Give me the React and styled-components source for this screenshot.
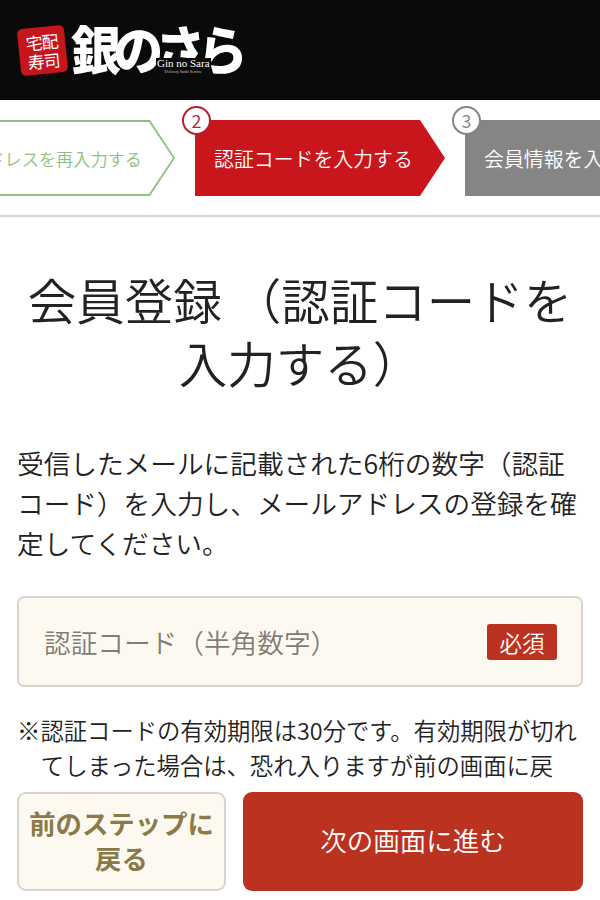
import React from "react";
import styled, { createGlobalStyle } from "styled-components";

const Global = createGlobalStyle`
  html, body { margin: 0; padding: 0; background: #fff; }
  body { font-family: "Noto Sans CJK JP", "Noto Sans", sans-serif; color: #222; }
  * { box-sizing: border-box; }
`;

const Page = styled.div`
  position: relative;
  width: 600px;
  height: 900px;
  overflow: hidden;
  background: #fff;
`;

const Header = styled.header`
  height: 100px;
  background: #0a0a0a;
  display: flex;
  align-items: center;
  padding: 0 0 0 19px;
`;

const Stamp = styled.div`
  width: 47px;
  height: 47px;
  background: #c4161c;
  border-radius: 5px;
  transform: rotate(-6deg);
  color: #fff;
  font-size: 17px;
  font-weight: 400;
  line-height: 19px;
  letter-spacing: -1px;
  display: flex;
  flex-wrap: wrap;
  align-items: center;
  justify-content: center;
  text-align: center;
  padding: 3px 2px;
`;

const LogoBlock = styled.div`
  position: relative;
  margin: -4px 0 0 5px;
  width: 178px;
  height: 60px;
`;

const LogoText = styled.div`
  color: #fff;
  font-size: 52px;
  font-weight: 900;
  line-height: 60px;
  letter-spacing: -8px;
  white-space: nowrap;
  transform: scaleX(0.96);
  transform-origin: left center;
`;

const LogoSub = styled.div`
  position: absolute;
  left: 85px;
  top: 40px;
  font-family: "Liberation Serif", serif;
  color: #fff;
  background: #0a0a0a;
  font-size: 11px;
  line-height: 11px;
  padding: 0 1px;
  white-space: nowrap;
`;

const LogoTiny = styled.div`
  font-size: 4px;
  line-height: 5px;
  text-align: center;
  color: #ccc;
`;

const Steps = styled.nav`
  height: 117px;
  border-bottom: 2px solid #d5d5d5;
  display: flex;
  gap: 20px;
  padding-top: 20px;
  margin-left: -75px;
  width: 900px;
  overflow: hidden;
`;

const StepItem = styled.div`
  position: relative;
  flex: 0 0 250px;
  height: 76px;
`;

const Arrow = styled.div`
  height: 100%;
  background: ${(p) => p.$bg};
  clip-path: polygon(0 0, calc(100% - 25px) 0, 100% 50%, calc(100% - 25px) 100%, 0 100%);
  color: ${(p) => p.$fg};
  font-size: 19.9px;
  font-weight: 350;
  white-space: nowrap;
  display: flex;
  align-items: center;
  padding-left: 19px;
`;

const Square = styled(Arrow)`
  clip-path: none;
`;

const OutlineInner = styled.div`
  position: absolute;
  inset: 2px;
  background: #fff;
  clip-path: polygon(0 0, calc(100% - 24px) 0, 100% 50%, calc(100% - 24px) 100%, 0 100%);
  color: #8dc07f;
  font-size: 17.2px;
  white-space: nowrap;
  display: flex;
  align-items: center;
  justify-content: flex-end;
  padding-right: 31px;
`;

const Num = styled.span`
  position: absolute;
  left: -13px;
  top: -14px;
  width: 29px;
  height: 29px;
  border-radius: 50%;
  background: #fff;
  border: 2px solid ${(p) => p.$c};
  color: ${(p) => p.$c};
  font-size: 18px;
  font-weight: 350;
  line-height: 24px;
  text-align: center;
`;

const Main = styled.main`
  padding: 0 17px;
`;

const Title = styled.h1`
  margin: 51px 0 0;
  font-size: 48.5px;
  font-weight: 350;
  line-height: 63px;
  text-align: center;
  color: #222;
`;

const Lead = styled.p`
  margin: 49px 0 0;
  font-size: 26.67px;
  font-weight: 350;
  line-height: 40px;
  color: #222;
`;

const Field = styled.div`
  margin-top: 33px;
  height: 91px;
  background: #fdf9f1;
  border: 2px solid #d8d5ce;
  border-radius: 7px;
  display: flex;
  align-items: center;
  justify-content: space-between;
  padding: 0 24px 0 25px;
`;

const Placeholder = styled.span`
  font-size: 26.67px;
  font-weight: 350;
  color: #807d77;
`;

const Required = styled.span`
  width: 70px;
  height: 36px;
  background: #bb3320;
  border-radius: 3px;
  color: #fff;
  font-size: 22.5px;
  font-weight: 350;
  line-height: 36px;
  text-align: center;
`;

const Note = styled.p`
  margin: 26px 6px 0 0;
  font-size: 23.33px;
  font-weight: 350;
  line-height: 35px;
  color: #222;
  text-align: center;
`;

const Footer = styled.footer`
  position: absolute;
  left: 0;
  right: 0;
  bottom: 0;
  height: 118px;
  background: #fff;
  display: grid;
  grid-template-columns: 209px 340px;
  gap: 17px;
  padding: 10px 17px 9px;
`;

const BackButton = styled.button`
  border: 2px solid #d8d5ce;
  border-radius: 9px;
  background: #fdf9f1;
  color: #8a7a48;
  font: 700 26.4px/35px "Noto Sans CJK JP", sans-serif;
  padding: 0 2px 3px;
`;

const NextButton = styled.button`
  border: 0;
  border-radius: 9px;
  background: #bb3320;
  color: #fff;
  font: 350 26.5px/36px "Noto Sans CJK JP", sans-serif;
  padding: 0 0 3px;
`;

export default function App() {
  return (
    <Page>
      <Global />
      <Header>
        <Stamp>宅配寿司</Stamp>
        <LogoBlock>
          <LogoText>銀のさら</LogoText>
          <LogoSub>
            Gin no Sara
            <LogoTiny>Delivery Sushi Service</LogoTiny>
          </LogoSub>
        </LogoBlock>
      </Header>
      <Steps>
        <StepItem>
          <Arrow $bg="#8dc07f" $fg="#8dc07f">
            <OutlineInner>メールアドレスを再入力する</OutlineInner>
          </Arrow>
        </StepItem>
        <StepItem>
          <Arrow $bg="#c9161d" $fg="#fff">認証コードを入力する</Arrow>
          <Num $c="#b2232a">2</Num>
        </StepItem>
        <StepItem>
          <Square $bg="#858585" $fg="#fff">会員情報を入力する</Square>
          <Num $c="#858585">3</Num>
        </StepItem>
      </Steps>
      <Main>
        <Title>会員登録 （認証コードを入力する）</Title>
        <Lead>受信したメールに記載された6桁の数字（認証コード）を入力し、メールアドレスの登録を確定してください。</Lead>
        <Field>
          <Placeholder>認証コード（半角数字）</Placeholder>
          <Required>必須</Required>
        </Field>
        <Note>
          ※認証コードの有効期限は30分です。有効期限が切れてしまった場合は、恐れ入りますが前の画面に戻
          <br />
          り、再度お手続きください。
        </Note>
      </Main>
      <Footer>
        <BackButton>前のステップに戻る</BackButton>
        <NextButton>次の画面に進む</NextButton>
      </Footer>
    </Page>
  );
}
